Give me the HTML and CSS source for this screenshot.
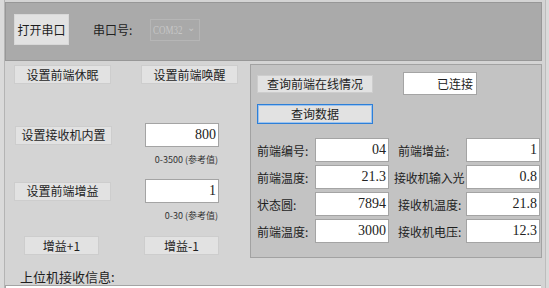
FILE: index.html
```html
<!DOCTYPE html>
<html lang="zh-CN">
<head>
	<meta charset="UTF-8">
	<title>串口调试</title>
	<link rel="stylesheet" href="styles.css">
</head>
<body>
	<div class="app">
		<div class="toolbar">
			<button class="btn btn-open">打开串口</button>
			<span class="port-label">串口号:</span>
			<div class="combo">
				<span class="combo-text">COM32</span>
				<span class="arrow">&#8964;</span>
			</div>
		</div>

		<div class="main">
			<div class="left">
				<div class="row row-1">
					<button class="btn btn-wide">设置前端休眠</button>
					<button class="btn btn-wide">设置前端唤醒</button>
				</div>
				<div class="row row-2">
					<button class="btn btn-wide btn-shift">设置接收机内置</button>
					<div class="field field-left">800</div>
				</div>
				<div class="hint hint-1">0-3500 (参考值)</div>
				<div class="row row-3">
					<button class="btn btn-wide">设置前端增益</button>
					<div class="field field-left">1</div>
				</div>
				<div class="hint hint-2">0-30 (参考值)</div>
				<div class="row row-4">
					<button class="btn btn-small">增益+1</button>
					<button class="btn btn-small">增益-1</button>
				</div>
			</div>

			<div class="group">
				<div class="row row-a">
					<button class="btn btn-query">查询前端在线情况</button>
					<div class="field field-status">已连接</div>
				</div>
				<button class="btn btn-query btn-focus">查询数据</button>
				<div class="data">
					<span class="lbl">前端编号:</span>
					<div class="field">04</div>
					<span class="lbl">前端增益:</span>
					<div class="field">1</div>

					<span class="lbl">前端温度:</span>
					<div class="field">21.3</div>
					<span class="lbl lbl-long">接收机输入光</span>
					<div class="field">0.8</div>

					<span class="lbl">状态圆:</span>
					<div class="field">7894</div>
					<span class="lbl">接收机温度:</span>
					<div class="field">21.8</div>

					<span class="lbl">前端温度:</span>
					<div class="field">3000</div>
					<span class="lbl">接收机电压:</span>
					<div class="field">12.3</div>
				</div>
			</div>
		</div>

		<div class="recv-label">上位机接收信息:</div>
		<div class="recv"></div>
	</div>
</body>
</html>
```

FILE: styles.css
```css
*{
	margin: 0;
	padding: 0;
	box-sizing: border-box;
}
body{
	width: 549px;
	height: 288px;
	overflow: hidden;
	background: #dadada;
	font-family: "Noto Sans CJK SC", "Liberation Sans", sans-serif;
	font-size: 12px;
	color: #1e1e1e;
}
.app{
	margin-left: 4px;
	width: 542px;
	height: 288px;
	overflow: hidden;
	padding-top: 2px;
	border-left: 1px solid #b4b4b4;
	border-right: 1px solid #bdbdbd;
	background: #d4d4d4;
}
.toolbar{
	width: 537px;
	height: 59px;
	background: #aaaaaa;
	border: 1px solid #979797;
	display: flex;
	align-items: flex-start;
	padding: 11px 0 0 8px;
}
.btn{
	font-family: "Noto Sans CJK SC", sans-serif;
	font-size: 12px;
	color: #1e1e1e;
	background: #e2e2e2;
	border: 1px solid #cdcdcd;
	line-height: 1;
	outline: none;
	cursor: pointer;
}
.btn-open{
	width: 55px;
	height: 31px;
	border-color: #d8d8d8;
}
.port-label{
	margin-left: 24px;
	line-height: 31px;
	color: #222;
}
.combo{
	margin: 5px 0 0 18px;
	width: 50px;
	height: 22px;
	border: 1px solid #b6b6b6;
	background: #a9a9a9;
	display: flex;
	align-items: center;
	justify-content: space-between;
	padding: 0 4px 0 2px;
	font-family: "Liberation Serif", serif;
	font-size: 12px;
	color: #c6c6c6;
}
.combo-text{
	display: inline-block;
	width: 30px;
	transform: scaleX(0.75);
	transform-origin: left center;
	white-space: nowrap;
}
.arrow{
	font-size: 10px;
	line-height: 10px;
	margin-top: -4px;
}
.main{
	display: flex;
	margin-top: 3px;
}
.left{
	width: 245px;
	padding-left: 9px;
}
.row{
	display: flex;
	align-items: center;
}
.row-1{
	margin-top: 1px;
	gap: 30px;
}
.btn-wide{
	width: 97px;
	height: 19px;
}
.row-2{
	margin-top: 39px;
	height: 24px;
}
.btn-shift{
	margin-left: 1px;
}
.field{
	height: 24px;
	width: 74px;
	background: #fff;
	border: 1px solid #a4a4a4;
	text-align: right;
	padding-right: 2px;
	font-family: "Liberation Serif", serif;
	font-size: 14px;
	line-height: 22px;
	color: #222;
}
.field-left{
	margin-left: 34px;
}
.row-2 .field-left{
	margin-left: 33px;
}
.hint{
	width: 204px;
	text-align: right;
	font-size: 9px;
	line-height: 14px;
	color: #333;
	margin-top: 6px;
}
.row-3{
	margin-top: 12px;
	height: 24px;
}
.hint-2{
	margin-top: 6px;
}
.row-4{
	margin-top: 13px;
	padding-left: 10px;
	gap: 45px;
}
.btn-small{
	width: 75px;
	height: 19px;
}
.group{
	width: 292px;
	height: 194px;
	background: #c3c3c3;
	border: 1px solid #a2a2a2;
	padding-left: 6px;
}
.row-a{
	margin-top: 7px;
	height: 23px;
}
.btn-query{
	width: 116px;
	height: 18px;
	display: block;
}
.field-status{
	margin-left: 30px;
	height: 23px;
	font-family: "Noto Sans CJK SC", sans-serif;
	font-size: 12px;
	line-height: 21px;
	padding-right: 3px;
}
.btn-focus{
	margin-top: 9px;
	height: 20px;
	border: 1px solid #2d7fd8;
	box-shadow: inset 0 0 0 1px #9cc3ee;
}
.data{
	margin-top: 14px;
	display: grid;
	grid-template-columns: 58px 74px 9px 68px 74px;
	grid-template-rows: repeat(4, 24px);
	row-gap: 3px;
	align-items: center;
}
.data .lbl{
	white-space: nowrap;
	line-height: 14px;
	margin-top: 2px;
}
.data .lbl:nth-child(4n+3){
	grid-column: 4;
}
.data .lbl-long{
	margin-left: -4px;
	letter-spacing: -0.3px;
}
.recv-label{
	margin: 11px 0 0 15px;
	font-size: 13px;
	line-height: 16px;
}
.recv{
	width: 536px;
	height: 10px;
	background: #fff;
	border-top: 1px solid #a4a4a4;
	border-left: 1px solid #a4a4a4;
}
```
